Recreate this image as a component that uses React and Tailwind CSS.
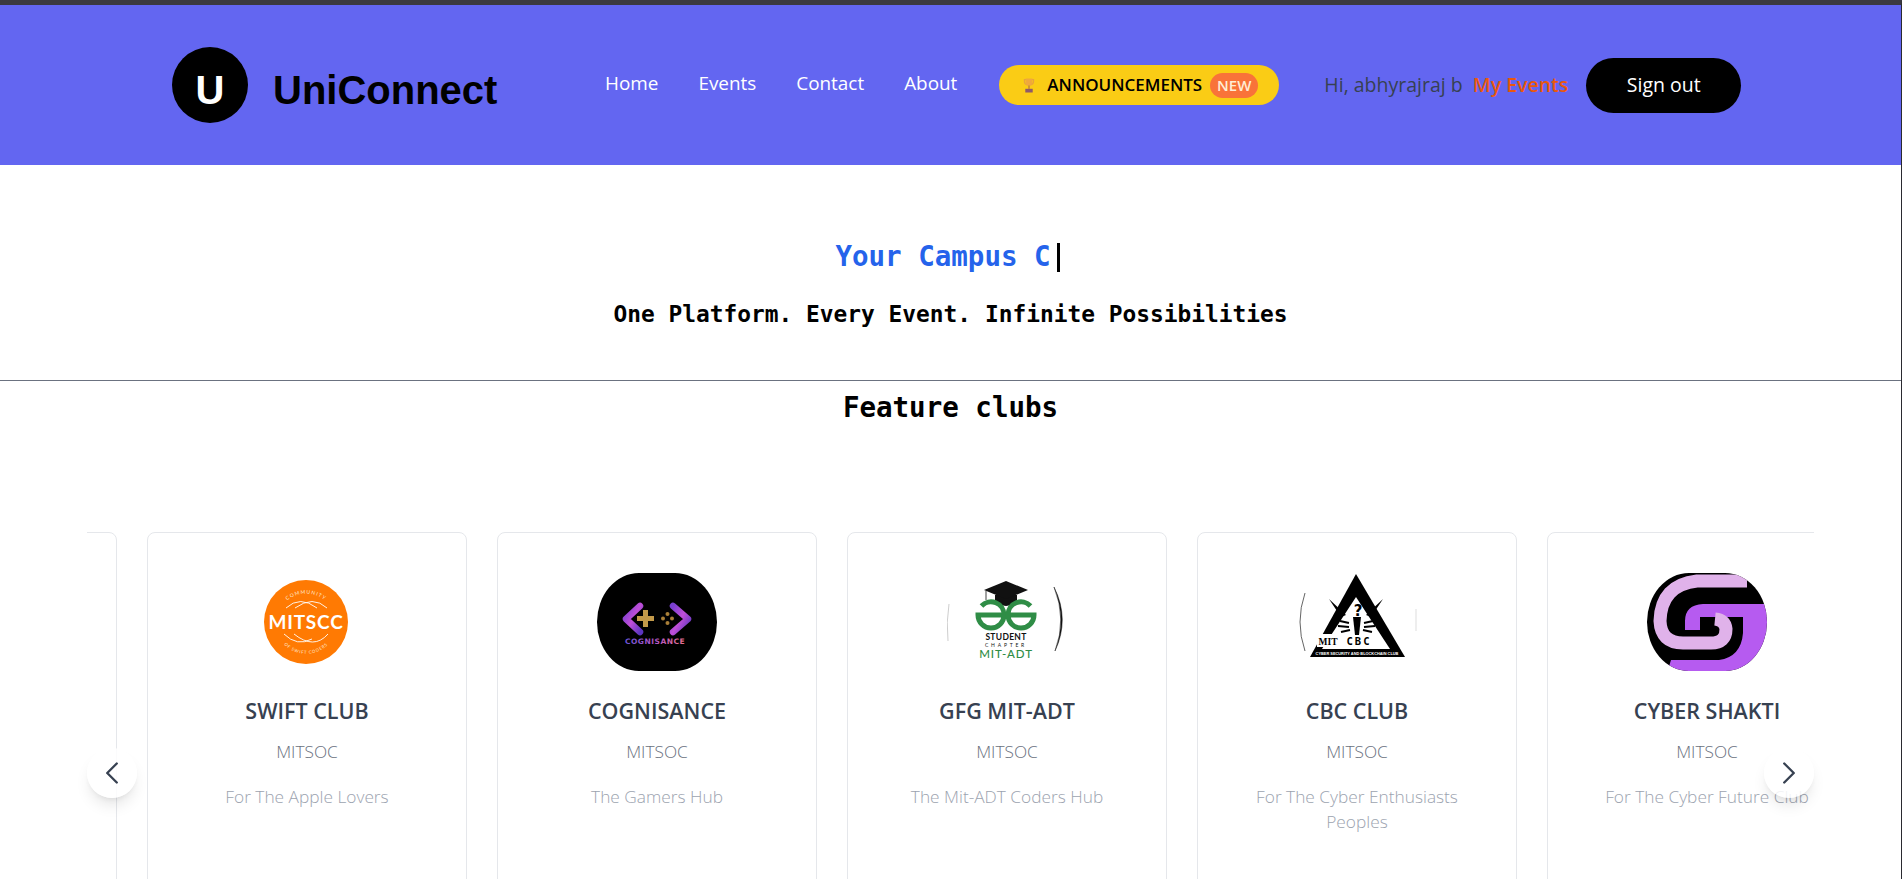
import { ChevronLeft, ChevronRight } from "lucide-react";

const SwiftLogo = () => (
  <svg width="84" height="84" viewBox="0 0 84 84" className="-ml-[2px]">
    <circle cx="42" cy="42" r="42" fill="#ff7a03" />
    <defs>
      <path id="swift-top" d="M13 36 A30 30 0 0 1 71 36" />
      <path id="swift-bottom" d="M15 58 A31 31 0 0 0 69 58" />
    </defs>
    <text fill="#ffe9d2" fontSize="5" fontFamily="Lato, sans-serif" letterSpacing="1">
      <textPath href="#swift-top" startOffset="50%" textAnchor="middle">COMMUNITY</textPath>
    </text>
    <text fill="#ffe9d2" fontSize="4.2" fontFamily="Lato, sans-serif" letterSpacing="0.8">
      <textPath href="#swift-bottom" startOffset="50%" textAnchor="middle">OF SWIFT CODERS</textPath>
    </text>
    <g fill="none" stroke="#fff" strokeWidth="0.9">
      <path d="M22 28 Q36 15 53 28" />
      <path d="M31 28 Q49 15 63 28" />
      <path d="M20 54 Q33 67 48 59" />
      <path d="M30 54 Q50 70 64 54" />
    </g>
    <text x="42" y="48.500" textAnchor="middle" fill="#fff" fontSize="19" fontWeight="700" fontFamily="Lato, sans-serif" letterSpacing="0.8">MITSCC</text>
  </svg>
);

const CognisanceLogo = () => (
  <svg width="120" height="98" viewBox="0 0 120 98">
    <defs>
      <linearGradient id="cog-purple" x1="0" y1="0" x2="1" y2="1">
        <stop offset="0" stopColor="#7a3fd0" />
        <stop offset="0.5" stopColor="#c04fd8" />
        <stop offset="1" stopColor="#5d35c0" />
      </linearGradient>
      <linearGradient id="cog-text" x1="0" y1="0" x2="1" y2="0">
        <stop offset="0" stopColor="#6a55d8" />
        <stop offset="0.5" stopColor="#b255c8" />
        <stop offset="1" stopColor="#e8708a" />
      </linearGradient>
    </defs>
    <rect width="120" height="98" rx="42" ry="49" fill="#000" />
    <path d="M43 33 L29 46 L43 59" fill="none" stroke="url(#cog-purple)" strokeWidth="6.500" strokeLinejoin="round" strokeLinecap="round" />
    <path d="M76 33 L91 46 L76 59" fill="none" stroke="url(#cog-purple)" strokeWidth="6.500" strokeLinejoin="round" strokeLinecap="round" />
    <path d="M44 38 h5 v6 h6 v5 h-6 v6 h-5 v-6 h-6 v-5 h6 z" fill="#c39a4a" transform="translate(2 -1)" />
    <g fill="#a97f38">
      <circle cx="70.500" cy="41" r="2" />
      <circle cx="70.500" cy="50" r="2" />
      <circle cx="66" cy="45.500" r="2" />
      <circle cx="75" cy="45.500" r="2" />
    </g>
    <text x="58" y="71" textAnchor="middle" fill="url(#cog-text)" fontSize="7.500" fontWeight="700" fontFamily="DejaVu Sans, sans-serif" letterSpacing="0.5">COGNISANCE</text>
  </svg>
);

const GfgLogo = () => (
  <svg width="120" height="98" viewBox="0 0 120 98">
    <path d="M2 31 Q-1 49 1 68" fill="none" stroke="#b8b8b8" strokeWidth="0.7" />
    <path d="M107 14 Q123 46 108 78 Q120 46 107 14" fill="#111" stroke="#111" strokeWidth="0.5" />
    <path d="M48 22 L70 22 L70 30 Q59 36 48 30 Z" fill="#111" />
    <path d="M37 17 L59 8 L81 17 L59 26 Z" fill="#111" />
    <path d="M39 18 V27" stroke="#111" strokeWidth="0.8" />
    <g fill="none" stroke="#2f8d46" strokeWidth="5">
      <path d="M34.500 33 A13 13 0 0 1 57 42 A13 13 0 0 1 31 42 H57" />
      <path d="M83.500 33 A13 13 0 0 0 61 42 A13 13 0 0 0 87 42 H61" />
    </g>
    <text x="59" y="67" textAnchor="middle" fill="#111" fontSize="8.500" fontWeight="700" fontFamily="Lato, sans-serif" letterSpacing="0.3">STUDENT</text>
    <text x="59" y="74" textAnchor="middle" fill="#111" fontSize="5" fontFamily="Lato, sans-serif" letterSpacing="2.800">CHAPTER</text>
    <text x="59" y="85" textAnchor="middle" fill="#2f8d46" fontSize="11.500" fontWeight="500" fontFamily="Lato, sans-serif" letterSpacing="0.9">MIT-ADT</text>
  </svg>
);

const CbcLogo = () => (
  <svg width="120" height="98" viewBox="0 0 120 98">
    <path d="M8 20 Q-2 49 8 78" fill="none" stroke="#222" strokeWidth="0.7" />
    <path d="M119 36 V58" stroke="#ddd" strokeWidth="1" />
    <path d="M59 1 L108 84 H13 Z" fill="#000" />
    <path d="M59 24 L93 76 H25 Z" fill="#fff" />
    <rect x="20" y="61" width="22" height="13" fill="#fff" />
    <path d="M32 26 L49 42 L44 44 Z M86 26 L69 42 L74 44 Z" fill="#000" />
    <path d="M56 44 L64 44 L62 62 L58 62 Z" fill="#000" />
    <path d="M43 48 L52 50 M41 53 L52 54 M44 59 L53 57 M76 48 L67 50 M78 53 L67 54 M75 59 L66 57" stroke="#000" strokeWidth="2" />
    <text x="61" y="43" textAnchor="middle" fill="#000" fontSize="15" fontWeight="700" fontFamily="DejaVu Sans, sans-serif">?</text>
    <text x="31" y="72" textAnchor="middle" fill="#000" fontSize="9.500" fontWeight="700" fontFamily="Liberation Serif, serif">MIT</text>
    <text x="62" y="72" textAnchor="middle" fill="#000" fontSize="10.500" fontWeight="700" fontFamily="DejaVu Sans Mono, monospace" letterSpacing="2">CBC</text>
    <text x="60" y="81.500" textAnchor="middle" fill="#fff" fontSize="3.900" fontWeight="700" fontFamily="Liberation Sans, sans-serif">CYBER SECURITY AND BLOCKCHAIN CLUB</text>
  </svg>
);

const ShaktiLogo = () => (
  <svg width="120" height="98" viewBox="0 0 120 98">
    <defs>
      <clipPath id="shakti-clip">
        <rect width="120" height="98" rx="42" ry="49" />
      </clipPath>
    </defs>
    <g clipPath="url(#shakti-clip)">
      <rect width="120" height="98" fill="#000" />
      <path d="M125 31 H56 Q38 32 38 48 V57 H53 V44 H125 Z" fill="#b65bf0" />
      <path d="M96 43 H125 V100 H20 L24 87 H72 Q94 84 96 60 Z" fill="#b65bf0" />
      <path d="M100 8 H50 Q14 12 13 48 Q14 70 36 70 H64 Q79 70 79 56 Q78 47 68 46" fill="none" stroke="#e0b2ea" strokeWidth="13" />
    </g>
  </svg>
);

const clubs = [
  { name: "", org: "", about: "", Logo: null },
  { name: "SWIFT CLUB", org: "MITSOC", about: "For The Apple Lovers", Logo: SwiftLogo },
  { name: "COGNISANCE", org: "MITSOC", about: "The Gamers Hub", Logo: CognisanceLogo },
  { name: "GFG MIT-ADT", org: "MITSOC", about: "The Mit-ADT Coders Hub", Logo: GfgLogo },
  { name: "CBC CLUB", org: "MITSOC", about: "For The Cyber Enthusiasts Peoples", Logo: CbcLogo },
  { name: "CYBER SHAKTI", org: "MITSOC", about: "For The Cyber Future Club", Logo: ShaktiLogo },
];

const navLinks = ["Home", "Events", "Contact", "About"];

const TrophyIcon = () => (
  <svg width="14" height="17" viewBox="0 0 17 20">
    <path d="M3 3 H14 V5 Q14 8 11 9 H6 Q3 8 3 5 Z" fill="none" stroke="#e8a33d" strokeWidth="1.500" />
    <path d="M4.500 1.500 H12.500 V6 Q12.500 10 8.500 11 Q4.500 10 4.500 6 Z" fill="#f0a83c" />
    <rect x="7.500" y="10" width="2" height="4" fill="#c98a35" />
    <rect x="4" y="14" width="9" height="4.500" fill="#8d5a6a" />
  </svg>
);

const ClubCard = ({ club }) => {
  const { Logo } = club;
  return (
    <div className="w-[320px] h-[500px] shrink-0 rounded-lg border border-gray-200 bg-white pt-[39px] px-8 text-center">
      <div className="h-[100px] flex items-center justify-center">
        {Logo && <Logo />}
      </div>
      <h3 className="mt-[25px] text-[21.500px] leading-7 font-semibold text-[#374151]">{club.name}</h3>
      <p className="mt-[15px] text-[17.300px] leading-6 font-light text-[#6b7280]">{club.org}</p>
      <p className="mt-5 text-[17.300px] leading-[25px] font-light text-[#9ca3af]">{club.about}</p>
    </div>
  );
};

export default function App() {
  return (
    <div className="h-screen overflow-hidden bg-white border-t-[5px] border-t-[#3b3a40] border-r border-r-[#2a2a30] font-['Open_Sans',sans-serif]">
      {/* Navbar */}
      <nav className="h-[160px] bg-[#6366f1] pl-[172px] flex items-center">
        <div className="w-[76px] h-[76px] rounded-full bg-black flex items-center justify-center mr-[25px]">
          <span className="mt-[10px] text-white text-[40px] font-bold font-['Liberation_Sans',sans-serif]">U</span>
        </div>
        <span className="mt-[10px] text-[40px] leading-none font-bold text-black font-['Liberation_Sans',sans-serif] w-[332px]">UniConnect</span>
        <div className="flex items-center gap-10 text-white text-[18.900px] -mt-[4px]">
          {navLinks.map((link) => (
            <a key={link} href="#" className="block">{link}</a>
          ))}
        </div>
        <button className="ml-[42px] w-[280px] h-10 rounded-full bg-[#facc15] flex items-center pl-[23px] text-black text-[17px] font-semibold">
          <TrophyIcon />
          <span className="ml-[11px]">ANNOUNCEMENTS</span>
          <span className="ml-2 w-[48px] h-[25px] flex items-center justify-center rounded-full bg-[#f97339] text-[#ffedd5] text-[15px] font-semibold">NEW</span>
        </button>
        <span className="ml-[45px] text-[19.500px] text-[#374151]">Hi, abhyrajraj b</span>
        <a href="#" className="ml-[10px] text-[19.500px] font-semibold text-[#ea580c]">My Events</a>
        <button className="ml-[18px] w-[155px] h-[55px] rounded-full bg-black text-white text-[19.500px]">Sign out</button>
      </nav>

      {/* Hero */}
      <section className="h-[216px] border-b border-b-[#6b7280] flex flex-col items-center pt-[67px] font-['DejaVu_Sans_Mono',monospace] font-bold">
        <div className="flex items-center h-[50px] mr-[6px]">
          <span className="text-[27.500px] text-[#2563eb]">Your Campus C</span>
          <span className="ml-[6px] w-[3px] h-[29px] bg-black" />
        </div>
        <p className="mt-4 text-[22.850px] leading-8 text-black">One Platform. Every Event. Infinite Possibilities</p>
      </section>

      {/* Feature clubs */}
      <h2 className="mt-[8px] h-[143px] text-center text-[27.500px] leading-9 font-bold text-black font-['DejaVu_Sans_Mono',monospace]">Feature clubs</h2>

      <div className="relative mx-[87px]">
        <div className="overflow-hidden">
          <div className="flex gap-[30px] -ml-[290px]">
            {clubs.map((club, i) => (
              <ClubCard key={i} club={club} />
            ))}
          </div>
        </div>
        <button className="absolute left-0 top-[216px] w-[50px] h-[50px] rounded-full bg-white/85 shadow-lg flex items-center justify-center text-[#374151]">
          <ChevronLeft size={38} strokeWidth={1.500} />
        </button>
        <button className="absolute right-0 top-[216px] w-[50px] h-[50px] rounded-full bg-white/85 shadow-lg flex items-center justify-center text-[#374151]">
          <ChevronRight size={38} strokeWidth={1.500} />
        </button>
      </div>
    </div>
  );
}
